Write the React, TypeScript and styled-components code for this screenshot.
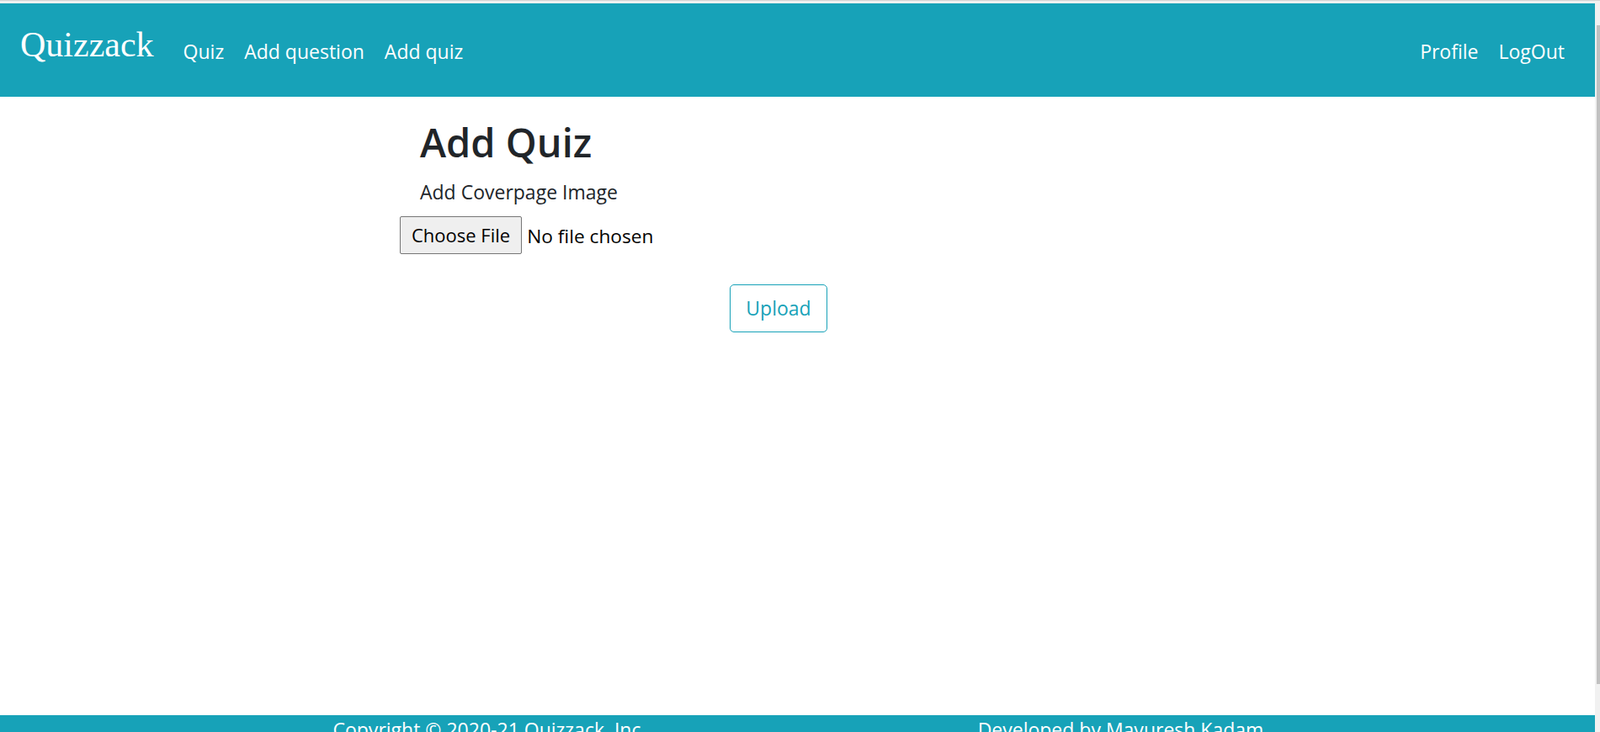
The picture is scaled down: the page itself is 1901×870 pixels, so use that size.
import styled, { createGlobalStyle } from "styled-components";

const GlobalStyle = createGlobalStyle`
    html, body {
        margin: 0;
        padding: 0;
        overflow: hidden;
    }
    body {
        font-family: "Open Sans", "Noto Sans", sans-serif;
        color: #212529;
        background: #fff;
    }
`

const Frame = styled.div`
    height: 910px;
    display: flex;
    flex-direction: column;
    overflow: hidden;
`

const TopEdge = styled.div`
    height: 3px;
    flex-shrink: 0;
    border-top: 1px solid #d3d3d3;
    background: #f1f1f1;
`

const Body = styled.div`
    flex: 1;
    min-height: 0;
    display: flex;
`

const Main = styled.div`
    flex: 1;
    display: flex;
    flex-direction: column;
    min-width: 0;
`

const ScrollTrack = styled.div`
    width: 6px;
    flex-shrink: 0;
    background: #f1f1f1;
    padding: 26px 0 0 2px;
    box-sizing: border-box;
`

const ScrollThumb = styled.div`
    width: 4px;
    height: 783px;
    background: #c1c1c1;
`

const NavBar = styled.nav`
    height: 111px;
    flex-shrink: 0;
    background: #17a2b8;
    display: flex;
    align-items: center;
    padding: 0 24px;
    box-sizing: border-box;
`

const Brand = styled.a`
    font-family: "Liberation Serif", serif;
    font-size: 42px;
    line-height: 1;
    color: #fff;
    margin: 0 23px 14px 0;
    text-decoration: none;
`

const NavList = styled.div<{ $right?: boolean }>`
    display: flex;
    margin-left: ${p => (p.$right ? "auto" : "0")};
    margin-top: 3px;
`

const NavLink = styled.a`
    font-size: 23px;
    line-height: 1.5;
    color: #fff;
    padding: 0 12px;
    text-decoration: none;
    cursor: pointer;
`

const Content = styled.main`
    flex: 1;
`

const Container = styled.div`
    width: 945px;
    margin: 0 auto;
`

const Title = styled.h1`
    font-size: 47px;
    font-weight: 600;
    line-height: 1.2;
    margin: 26px 0 14px 24px;
`

const Label = styled.label`
    display: block;
    font-size: 23px;
    line-height: 1.5;
    margin-left: 24px;
`

const FileInput = styled.input`
    display: block;
    margin-top: 11px;
    width: 420px;
    font-family: "Open Sans", sans-serif;
    font-size: 22.7px;
    color: #000;

    &::file-selector-button {
        font: inherit;
        font-size: 22px;
        color: #000;
        height: 45px;
        padding: 0 13px;
        margin-right: 6px;
        background: #efefef;
        border: 1px solid #767676;
        border-radius: 2px;
    }
`

const ButtonRow = styled.div`
    width: 900px;
    display: flex;
    justify-content: center;
    margin-top: 36px;
`

const UploadButton = styled.button`
    font-family: "Open Sans", sans-serif;
    font-size: 23px;
    line-height: 1.5;
    color: #17a2b8;
    background: transparent;
    border: 1px solid #17a2b8;
    border-radius: 5px;
    padding: 10.5px 18px;
    cursor: pointer;
`

const Footer = styled.footer`
    height: 60px;
    flex-shrink: 0;
    background: #17a2b8;
    color: #fff;
`

const FooterRow = styled.div`
    display: grid;
    grid-template-columns: 750px 750px;
    justify-content: center;
    padding-left: 18px;
`

const FooterText = styled.p`
    margin: 0;
    font-size: 23px;
    line-height: 1.5;
    text-align: center;
`

const App = () => {
    return (
        <>
            <GlobalStyle/>
            <Frame>
                <TopEdge/>
                <Body>
                    <Main>
                        <NavBar>
                            <Brand>Quizzack</Brand>
                            <NavList>
                                <NavLink>Quiz</NavLink>
                                <NavLink>Add question</NavLink>
                                <NavLink>Add quiz</NavLink>
                            </NavList>
                            <NavList $right>
                                <NavLink>Profile</NavLink>
                                <NavLink>LogOut</NavLink>
                            </NavList>
                        </NavBar>
                        <Content>
                            <Container>
                                <Title>Add Quiz</Title>
                                <Label htmlFor="cover">Add Coverpage Image</Label>
                                <FileInput id="cover" type="file"/>
                                <ButtonRow>
                                    <UploadButton>Upload</UploadButton>
                                </ButtonRow>
                            </Container>
                        </Content>
                        <Footer>
                            <FooterRow>
                                <FooterText>Copyright © 2020-21 Quizzack, Inc.</FooterText>
                                <FooterText>Developed by Mayuresh Kadam</FooterText>
                            </FooterRow>
                        </Footer>
                    </Main>
                    <ScrollTrack>
                        <ScrollThumb/>
                    </ScrollTrack>
                </Body>
            </Frame>
        </>
    );
}

export default App;
